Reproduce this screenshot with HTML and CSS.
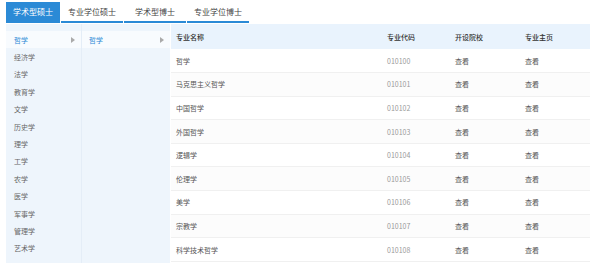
FILE: index.html
```html
<!DOCTYPE html>
<html lang="zh-CN">

<head>
  <meta charset="utf-8">
  <title>专业目录</title>
  <link rel="stylesheet" href="styles.css">
</head>

<body>
  <div class="tabs">
    <div class="tab active">学术型硕士</div>
    <div class="tab">专业学位硕士</div>
    <div class="tab wide">学术型博士</div>
    <div class="tab">专业学位博士</div>
  </div>

  <div class="panel">
    <ul class="menu first">
      <li class="selected"><span>哲学</span><i class="arrow"></i></li>
      <li>经济学</li>
      <li>法学</li>
      <li>教育学</li>
      <li>文学</li>
      <li>历史学</li>
      <li>理学</li>
      <li>工学</li>
      <li>农学</li>
      <li>医学</li>
      <li>军事学</li>
      <li>管理学</li>
      <li>艺术学</li>
    </ul>
    <ul class="menu second">
      <li class="selected"><span>哲学</span><i class="arrow"></i></li>
    </ul>

    <table class="majors">
      <thead>
        <tr>
          <th class="col-name">专业名称</th>
          <th class="col-code">专业代码</th>
          <th class="col-link">开设院校</th>
          <th class="col-link">专业主页</th>
        </tr>
      </thead>
      <tbody>
        <tr><td>哲学</td><td class="code">010100</td><td>查看</td><td>查看</td></tr>
        <tr><td>马克思主义哲学</td><td class="code">010101</td><td>查看</td><td>查看</td></tr>
        <tr><td>中国哲学</td><td class="code">010102</td><td>查看</td><td>查看</td></tr>
        <tr><td>外国哲学</td><td class="code">010103</td><td>查看</td><td>查看</td></tr>
        <tr><td>逻辑学</td><td class="code">010104</td><td>查看</td><td>查看</td></tr>
        <tr><td>伦理学</td><td class="code">010105</td><td>查看</td><td>查看</td></tr>
        <tr><td>美学</td><td class="code">010106</td><td>查看</td><td>查看</td></tr>
        <tr><td>宗教学</td><td class="code">010107</td><td>查看</td><td>查看</td></tr>
        <tr><td>科学技术哲学</td><td class="code">010108</td><td>查看</td><td>查看</td></tr>
      </tbody>
    </table>
  </div>
</body>

</html>
```

FILE: styles.css
```css
body {
  margin: 0;
  padding: 2px 4px 0 6px;
  background-color: #fff;
  color: #555;
  font-family: "Noto Sans CJK SC", "Noto Sans", sans-serif;
  font-size: 7px;
}

.tabs {
  display: flex;
  gap: 1px;
  height: 21px;
}

.tab {
  padding: 0 7px;
  line-height: 19px;
  font-size: 8px;
  color: #444;
  border-bottom: 2px solid #2b8ad6;
}

.tab.wide {
  padding: 0 11px;
}

.tab.active {
  background-color: #2b8ad6;
  color: #fff;
}

.panel {
  display: flex;
  margin-top: 1px;
  height: 239px;
}

.menu {
  margin: 0;
  padding: 7px 0 0;
  list-style: none;
  background-color: #eef5fc;
}

.menu.first {
  width: 75px;
  border-right: 1px solid #e4edf7;
}

.menu.second {
  width: 88px;
}

.menu li {
  display: flex;
  align-items: center;
  justify-content: space-between;
  height: 17.4px;
  padding: 0 6px 0 8px;
  color: #666;
}

.menu.second li {
  padding-left: 7px;
}

.menu li.selected {
  background-color: #f8fbfe;
  color: #2b8ad6;
}

.arrow {
  width: 0;
  height: 0;
  border-top: 3px solid transparent;
  border-bottom: 3px solid transparent;
  border-left: 4px solid #aaa;
}

.majors {
  flex: 1;
  align-self: flex-start;
  border-collapse: collapse;
  margin-left: 1px;
}

.majors th {
  height: 25px;
  padding: 0 0 0 5px;
  background-color: #e9f3fd;
  color: #333;
  font-weight: 500;
  text-align: left;
}

.majors td {
  height: 23.6px;
  padding: 0 0 0 5px;
  border-bottom: 1px solid #f0f0f0;
  box-sizing: border-box;
}

.majors tbody tr:nth-child(even) {
  background-color: #fcfcfc;
}

.col-name {
  width: 206px;
}

.col-code {
  width: 63px;
}

.col-link {
  width: 65px;
}

.code {
  color: #999;
}
```
